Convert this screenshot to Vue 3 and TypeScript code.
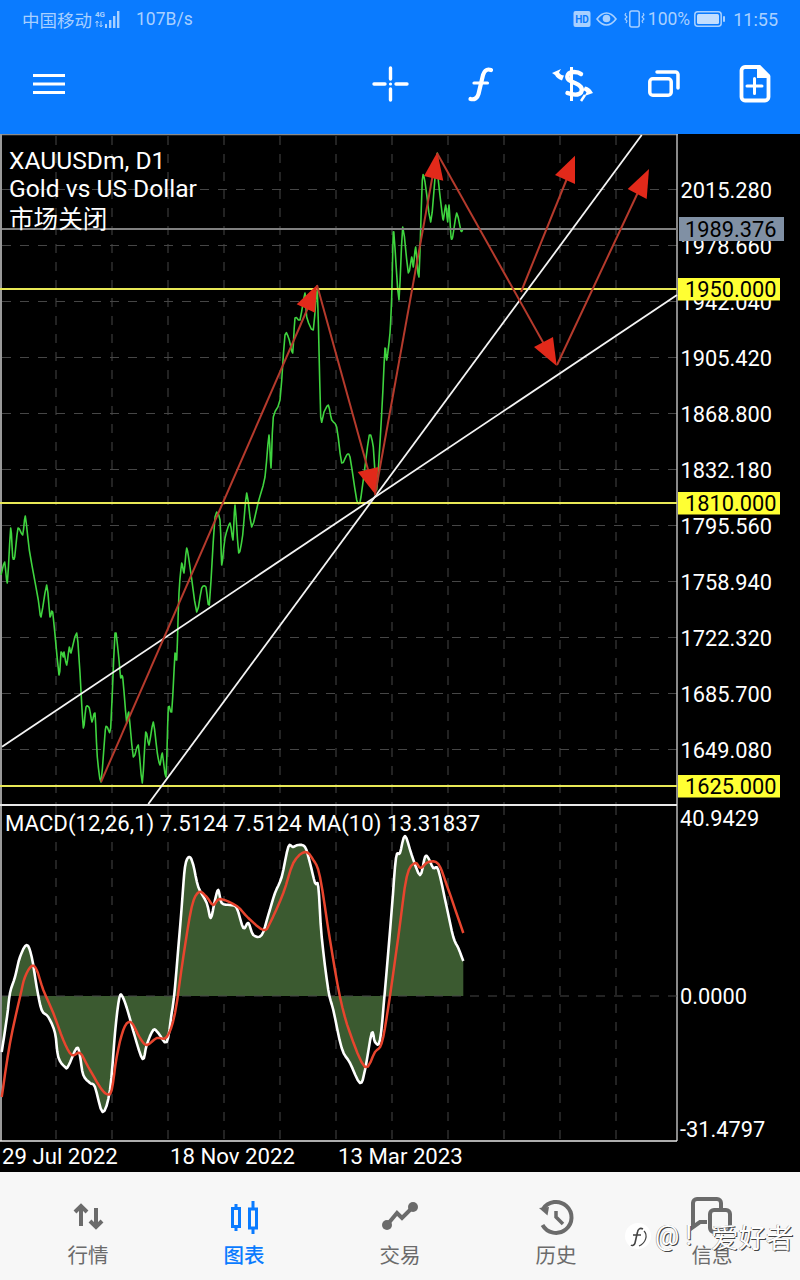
<script setup lang="ts">
type P = [number, number];
const toPts = (a: P[]) => a.map((p) => `${+p[0].toFixed(1)},${+p[1].toFixed(1)}`).join(' ');

// Catmull-Rom resampling: the indicator lines are drawn smooth on the real chart.
const smooth = (a: P[], steps = 4, k = 0.5): P[] => {
  const out: P[] = [];
  for (let i = 0; i < a.length - 1; i++) {
    const p0 = a[Math.max(i - 1, 0)];
    const p1 = a[i];
    const p2 = a[i + 1];
    const p3 = a[Math.min(i + 2, a.length - 1)];
    for (let s = 0; s < steps; s++) {
      const t = s / steps;
      const f = (j: 0 | 1) => {
        const m1 = (p2[j] - p0[j]) * k;
        const m2 = (p3[j] - p1[j]) * k;
        const t2 = t * t;
        const t3 = t2 * t;
        return (2 * t3 - 3 * t2 + 1) * p1[j] + (t3 - 2 * t2 + t) * m1 + (-2 * t3 + 3 * t2) * p2[j] + (t3 - t2) * m2;
      };
      out.push([f(0), f(1)]);
    }
  }
  out.push(a[a.length - 1]);
  return out;
};

const price: P[] = [[1,575],[4.7,562],[7.3,583],[10.7,528],[12.7,557],[14.7,557],[18,528],[22.7,535],[25.3,516],[29.3,550],[38.3,600],[41,617],[46.7,585],[50,617],[52.7,612],[59,675],[61,652],[63.3,657],[64,652],[66.7,665],[69.3,647],[71,653],[76.7,633],[80,673],[83.3,728],[86,707],[89.3,708],[92,722],[95,713],[97.3,757],[101,782],[105.3,730],[107.3,727],[110.7,728],[115,633],[118.3,653],[120.7,678],[122.7,677],[126.7,723],[128.7,712],[133.3,757],[138.3,745],[142.3,783],[145.7,732],[149,745],[153.3,722],[157.3,753],[160,765],[162.3,753],[166,777],[168.3,707],[171.7,712],[175,653],[176.7,660],[179,593],[181.7,563],[184,573],[186.7,548],[190,567],[196.7,612],[201.7,588],[206,587],[209.3,605],[215,517],[220,520],[221.7,565],[225,538],[230,523],[233,540],[235,505],[238.7,553],[242.7,535],[246.7,493],[251.7,527],[258.3,502],[265,477],[269,435],[271,468],[273.3,417],[280,400],[285,335],[289.3,340],[292.7,353],[295,318],[300,320],[305,293],[306.7,317],[313.3,330],[317.3,290],[320.7,417],[324,412],[328.3,405],[331.7,420],[336.7,427],[341.7,463],[346.7,455],[350,457],[356.7,500],[360,502],[363.3,480],[369.3,435],[373.3,447],[376.7,490],[381.7,413],[385,348],[386.7,360],[390,333],[391.7,297],[393.3,232],[395,248],[399,300],[402.7,227],[408.3,273],[411.7,257],[413.3,267],[415.7,247],[419,277],[422.3,180],[425,182],[430.7,222],[435,178],[437.3,153],[438.3,180],[441.7,210],[443.3,220],[445.7,205],[447.7,222],[449,205],[451,237],[452.7,237],[456.7,213],[461,231],[462.7,229.5]];

const macd: P[] = [[1.7,1052],[7,1017],[10,993],[15,977],[20,957],[26.7,945],[31.7,957],[36.7,987],[41.7,1010],[48.3,1017],[55,1033],[58.3,1057],[65,1067],[68.3,1066],[76.7,1048],[80,1056],[83.3,1075],[90,1083],[95,1087],[102.7,1112],[110,1090],[115,1033],[119.3,998],[122.7,997],[128.3,1013],[135,1037],[142.7,1059],[146.7,1045],[153.3,1030],[158.3,1033],[166.7,1042],[171.7,1013],[175,987],[181.7,907],[185,867],[189.3,857],[193.3,865],[198.3,887],[206.7,903],[210.7,918],[215,900],[218.3,890],[221.7,903],[230,905],[236.7,908],[243.3,928],[248.3,923],[253.3,935],[261.7,935],[268.3,915],[275,893],[281.7,877],[288.3,847],[293,847],[298.3,845],[305,847],[310,863],[315,883],[318.3,887],[321.7,937],[328.3,990],[333.3,1010],[341.7,1048],[350,1063],[360,1083],[365,1070],[371.7,1033],[375,1042],[380,1040],[385,990],[391.7,910],[396,858],[400,853],[405,836],[411.7,855],[420,875],[425,857],[428.3,858],[433.3,868],[438.3,870],[446.7,907],[453.3,937],[458.3,948],[463.3,961]];

const signal: P[] = [[1.7,1097],[10,1043],[20,997],[25,977],[31.7,966],[36.7,970],[43.3,990],[53.3,1013],[63.3,1040],[71.7,1055],[80,1053],[88.3,1067],[100,1087],[106.7,1094],[111.7,1090],[116.7,1057],[123.3,1030],[130.7,1022],[140,1038],[146.7,1045],[156.7,1038],[166.7,1037],[175,1013],[183.3,957],[191.7,907],[199,892],[206.7,897],[213.3,905],[220,899],[236.7,906],[248.3,918],[263.3,930],[270,923],[283.3,893],[293.3,863],[305,852],[313.3,860],[320,877],[330,940],[340,997],[350,1033],[365,1067],[375,1052],[381.7,1043],[388.3,1007],[398.3,937],[406.7,877],[415,863],[420.7,868],[428.3,862],[438.3,864],[446.7,885],[463.3,933]];

const pricePts = toPts(smooth(price, 3, 0.35));
const macdSmooth = smooth(macd);
const macdPts = toPts(macdSmooth);
const signalPts = toPts(smooth(signal));
const histPts = toPts([[2, 996] as P, ...macdSmooth, [463.3, 996] as P]);

const gridX = Array.from({ length: 11 }, (_, i) => 56 * (i + 1));
const axis = ['2015.280','1978.660','1942.040','1905.420','1868.800','1832.180','1795.560','1758.940','1722.320','1685.700','1649.080'];
const axisLabels = axis.map((t, i) => ({ t, y: 189.5 + 56 * i }));
const levels = [
  { t: '1950.000', y: 289 },
  { t: '1810.000', y: 503 },
  { t: '1625.000', y: 786 },
];
const arrows = [
  { l: [101,782,314,294], tri: [[317,285],[296.7,304.3],[315,312.7]] },
  { l: [317,285,372,484], tri: [[375.7,495],[357.7,472],[378.3,467]] },
  { l: [375,495,434,168], tri: [[437.3,152.3],[424,176],[443.3,180.7]] },
  { l: [437,153,549,353], tri: [[556.7,366],[534,347],[553,337]] },
  { l: [521,292,568,176], tri: [[575,155.7],[555,175],[575,184]] },
  { l: [557,365,640,188], tri: [[649,169],[627.7,189],[646.7,199]] },
].map((a) => ({ l: a.l, tri: toPts(a.tri as P[]) }));
const dates = [
  { t: '29 Jul 2022', x: 2 },
  { t: '18 Nov 2022', x: 170 },
  { t: '13 Mar 2023', x: 338 },
];
const tabs = [
  { id: 'quotes', label: '行情' },
  { id: 'chart', label: '图表', active: true },
  { id: 'trade', label: '交易' },
  { id: 'history', label: '历史' },
  { id: 'messages', label: '信息' },
];
</script>

<template>
  <div class="screen">
    <header class="top">
      <div class="status">
        <div class="status-left">
          <span class="carrier">中国移动</span>
          <span class="net">
            <svg width="28" height="22" viewBox="0 0 28 22">
              <text x="0" y="9" class="net4g">4G</text>
              <path d="M2 13v6M0.5 15l1.5-2 1.500 2M6 13v6M4.500 17l1.500 2 1.500-2" fill="none" stroke="#a8d0ff" stroke-width="1" />
              <rect x="10" y="16" width="2" height="4" fill="#a8d0ff" />
              <rect x="14" y="12" width="2.400" height="8" fill="#a8d0ff" />
              <rect x="18" y="8" width="2.400" height="12" fill="#a8d0ff" />
              <rect x="22" y="3" width="2.400" height="17" fill="#a8d0ff" />
            </svg>
          </span>
          <span class="speed">107B/s</span>
        </div>
        <div class="status-right">
          <svg width="18" height="18" viewBox="0 0 18 18">
            <rect x="0.500" y="1" width="17" height="16" rx="2" fill="#a8d0ff" />
            <text x="9" y="13" text-anchor="middle" class="hd">HD</text>
          </svg>
          <svg class="eye" width="21" height="14" viewBox="0 0 21 14">
            <path d="M1 7c3-4 6-6 9.500-6S17 3 20 7c-3 4-6 6-9.500 6S4 11 1 7z" fill="none" stroke="#a8d0ff" stroke-width="1.600" />
            <circle cx="10.500" cy="6.500" r="3.800" fill="#a8d0ff" />
          </svg>
          <svg class="vib" width="21" height="18" viewBox="0 0 21 18">
            <rect x="5.800" y="1" width="9.400" height="16" rx="2" fill="none" stroke="#a8d0ff" stroke-width="1.500" />
            <path d="M2 3l-1 2 2 2-2 2 2 2-1 2M19 3l1 2-2 2 2 2-2 2 1 2" fill="none" stroke="#a8d0ff" stroke-width="1.100" />
          </svg>
          <span class="pct">100%</span>
          <svg class="bat" width="32" height="16" viewBox="0 0 32 16">
            <rect x="0.800" y="0.800" width="26.400" height="14.400" rx="3" fill="none" stroke="#a8d0ff" stroke-width="1.500" />
            <rect x="3" y="3" width="22" height="10" rx="1.500" fill="#c2deff" />
            <rect x="29" y="5" width="2" height="6" rx="1" fill="#a8d0ff" />
          </svg>
          <span class="clock">11:55</span>
        </div>
      </div>
      <div class="toolbar">
        <svg class="tool menu" width="34" height="24" viewBox="32 73 34 24">
          <path d="M33 76.500h32M33 85h32M33 93.500h32" stroke="#fff" stroke-width="3" fill="none" />
        </svg>
        <div class="tools">
          <svg class="tool" width="40" height="40" viewBox="370 65 40 40">
            <path d="M374 85h11M396 85h11M390.500 69v11M390.500 90v11" stroke="#fff" stroke-width="3.400" stroke-linecap="round" fill="none" />
            <circle cx="390.500" cy="85" r="1.600" fill="#fff" />
          </svg>
          <svg class="tool" width="30" height="40" viewBox="466 65 30 40">
            <path d="M491 71c-4.500-1.500-6.500.500-8 5l-4.500 19c-1 4-4 6-8 5" stroke="#fff" stroke-width="4.200" stroke-linecap="round" fill="none" />
            <path d="M474 84h13.500" stroke="#fff" stroke-width="3.200" stroke-linecap="round" />
          </svg>
          <svg class="tool" width="46" height="40" viewBox="550 65 46 40">
            <path d="M571.500 68v34" stroke="#fff" stroke-width="3" />
            <path d="M581 75c-3-2.500-11-3-13 .500-2.500 5 3 7 7 8.500 5 2 8.500 5 6 9.500-2 3-8.500 2.500-13.500.500" stroke="#fff" stroke-width="4.400" fill="none" stroke-linecap="round" />
            <path d="M552 74l9-4-2 3.500c1 2 3 3 5 3l-2 5c-3-1-6-3-7-5.500z" fill="#fff" />
            <path d="M593 94l-8.500 3 2-3.500c-1-1.500-2-2-3.500-2l2-4c3 .500 5 2 6 3.500z" fill="#fff" />
            <path d="M585 96l-4 6" stroke="#fff" stroke-width="2.500" />
          </svg>
          <svg class="tool" width="36" height="32" viewBox="646 69 36 32">
            <rect x="649.800" y="79.800" width="21.400" height="16.400" rx="3" fill="none" stroke="#fff" stroke-width="3.500" />
            <path d="M657 73h18.500a2.500 2.500 0 0 1 2.500 2.500V89" fill="none" stroke="#fff" stroke-width="3.500" stroke-linecap="round" />
          </svg>
          <svg class="tool" width="36" height="42" viewBox="737 64 36 42">
            <path d="M745 68h14l9.500 9.500V98a3.500 3.500 0 0 1-3.500 3.500h-20a3.500 3.500 0 0 1-3.500-3.500V71.500A3.500 3.500 0 0 1 745 68z" fill="none" stroke="#fff" stroke-width="3.800" />
            <path d="M757 66h3l10 10v3h-13z" fill="#fff" />
            <path d="M747 87h15M754.500 79.500v15" stroke="#fff" stroke-width="3" stroke-linecap="round" />
          </svg>
        </div>
      </div>
    </header>

    <main class="chart">
      <svg class="chart-svg" width="800" height="1038" viewBox="0 134 800 1038">
        <!-- grid -->
        <g class="grid">
          <line v-for="x in gridX" :key="'m' + x" :x1="x" y1="136" :x2="x" y2="804" />
          <line v-for="x in gridX" :key="'s' + x" :x1="x" y1="806" :x2="x" y2="1140" />
          <line v-for="a in axisLabels" :key="a.t" x1="2" :y1="a.y" x2="677" :y2="a.y" />
        </g>

        <!-- frame -->
        <line x1="0" y1="134.500" x2="678" y2="134.500" class="frame" />
        <rect x="0" y="134" width="2" height="1007" fill="#9a9a9a" />
        <line x1="677" y1="134" x2="677" y2="1141" class="frame-r" />
        <line x1="0" y1="805" x2="677" y2="805" stroke="#e8e8e8" stroke-width="2" />
        <line x1="0" y1="1141" x2="677" y2="1141" stroke="#e8e8e8" stroke-width="1.500" />

        <!-- main pane -->
        <polyline :points="pricePts" class="price" />
        <line x1="2" y1="229" x2="677" y2="229" stroke="#808080" stroke-width="2" />
        <line v-for="l in levels" :key="l.y" x1="0" :y1="l.y" x2="677" :y2="l.y" stroke="#e8e856" stroke-width="2" />
        <line x1="2" y1="746.700" x2="677" y2="295" class="trend" />
        <line x1="148.300" y1="804" x2="641.700" y2="135" class="trend" />
        <g v-for="(a, i) in arrows" :key="i">
          <line :x1="a.l[0]" :y1="a.l[1]" :x2="a.l[2]" :y2="a.l[3]" stroke="#b53a2c" stroke-width="2" />
          <polygon :points="a.tri" fill="#e2291a" />
        </g>

        <!-- price text -->
        <text x="9" y="169" class="title">XAUUSDm, D1</text>
        <text x="9" y="197" class="title">Gold vs US Dollar</text>
        <text x="9" y="228" class="title">市场关闭</text>

        <text v-for="a in axisLabels" :key="'t' + a.t" x="680.500" :y="a.y + 8" class="axis">{{ a.t }}</text>

        <rect x="679" y="217" width="105" height="24" fill="#8090a4" />
        <text x="685" y="237" class="axis dark">1989.376</text>

        <g v-for="l in levels" :key="'lv' + l.y">
          <rect x="678" :y="l.y - 11" width="102" height="22.500" fill="#ffff33" />
          <text x="685" :y="l.y + 8" class="axis dark">{{ l.t }}</text>
        </g>

        <!-- macd pane -->
        <polygon :points="histPts" fill="#3b5a30" />
        <line x1="2" y1="996" x2="677" y2="996" class="grid-line" />
        <polyline :points="macdPts" class="macd" />
        <polyline :points="signalPts" class="signal" />
        <text x="5" y="831" class="macd-title">MACD(12,26,1) 7.5124 7.5124 MA(10) 13.31837</text>
        <text x="680" y="826" class="axis">40.9429</text>
        <text x="680" y="1004" class="axis">0.0000</text>
        <text x="680" y="1137" class="axis">-31.4797</text>

        <text v-for="d in dates" :key="d.t" :x="d.x" y="1164" class="date">{{ d.t }}</text>
      </svg>
    </main>

    <nav class="tabs">
      <div v-for="t in tabs" :key="t.id" class="tab" :class="{ active: t.active }">
        <svg v-if="t.id === 'quotes'" width="44" height="44" viewBox="66 1195 44 44">
          <path d="M81 1207v19M75 1212l6-6 6 6" fill="none" stroke="#6b6b6b" stroke-width="4" />
          <path d="M96 1208v19M90 1221l6 6 6-6" fill="none" stroke="#6b6b6b" stroke-width="4" />
        </svg>
        <svg v-else-if="t.id === 'chart'" width="44" height="44" viewBox="222 1195 44 44">
          <rect x="232.500" y="1208.500" width="7" height="18" fill="none" stroke="#0a7bff" stroke-width="3" />
          <rect x="249.500" y="1209" width="7" height="19" fill="none" stroke="#0a7bff" stroke-width="3" />
          <path d="M236 1204v5M236 1226v5M253 1201v8M253 1228v6" stroke="#0a7bff" stroke-width="3" />
        </svg>
        <svg v-else-if="t.id === 'trade'" width="44" height="44" viewBox="378 1195 44 44">
          <path d="M387 1225l10-12 5 5 11-11" fill="none" stroke="#6b6b6b" stroke-width="4" />
          <circle cx="387" cy="1225" r="5" fill="#6b6b6b" />
          <circle cx="413" cy="1207" r="5" fill="#6b6b6b" />
        </svg>
        <svg v-else-if="t.id === 'history'" width="44" height="44" viewBox="534 1195 44 44">
          <path d="M543 1209a15.500 15.500 0 1 1-.500 16" fill="none" stroke="#6b6b6b" stroke-width="4" />
          <path d="M539 1208l10-1-1.500 8.500z" fill="#6b6b6b" />
          <path d="M556 1211v6l7 7" fill="none" stroke="#6b6b6b" stroke-width="3.500" />
        </svg>
        <svg v-else width="44" height="44" viewBox="690 1195 44 44">
          <path d="M721 1208v-5a4 4 0 0 0-4-4h-20a4 4 0 0 0-4 4v24l7-5h7" fill="none" stroke="#6b6b6b" stroke-width="4" />
          <rect x="710" y="1210" width="20" height="22" rx="4" fill="none" stroke="#6b6b6b" stroke-width="4" />
        </svg>
        <span class="tab-label">{{ t.label }}</span>
      </div>

      <div class="watermark">
        <span class="wm-logo">
          <svg width="26" height="26" viewBox="0 0 26 26">
            <circle cx="13" cy="13" r="13" fill="#fff" />
            <path d="M18 6c-3-1.500-5 0-5.500 3l-2.500 11c-.5 2.500-3 3-4 2M8 12h8" fill="none" stroke="#444" stroke-width="1.600" />
            <path d="M19 8c4 4 2 12-5 15" fill="none" stroke="#444" stroke-width="1.200" />
          </svg>
        </span>
        <span class="wm-at">@!</span>
        <span class="wm-name">爱好者</span>
      </div>
    </nav>
  </div>
</template>

<style scoped>
.screen {
  width: 800px;
  height: 1280px;
  display: flex;
  flex-direction: column;
  overflow: hidden;
  font-family: Roboto, "Noto Sans CJK SC", sans-serif;
}
.top {
  height: 134px;
  background: #0a7bff;
  display: flex;
  flex-direction: column;
}
.status {
  height: 38px;
  padding: 0 22px;
  display: flex;
  align-items: center;
  justify-content: space-between;
  color: #a8d0ff;
  font-size: 17.500px;
}
.status-left,
.status-right {
  display: flex;
  align-items: center;
}
.carrier {
  font-family: "Noto Sans CJK SC", sans-serif;
  font-size: 17.500px;
}
.net {
  display: flex;
  margin-left: 3px;
}
.net4g {
  font: 700 8px Roboto, sans-serif;
  fill: #a8d0ff;
}
.hd {
  font: 700 10px Roboto, sans-serif;
  fill: #0a7bff;
}
.speed {
  margin-left: 13px;
}
.eye {
  margin-left: 5px;
}
.vib {
  margin-left: 7px;
}
.pct {
  margin-left: 3px;
}
.bat {
  margin-left: 4px;
}
.clock {
  margin-left: 7px;
  font-size: 18px;
}
.toolbar {
  flex: 1;
  display: flex;
  align-items: center;
  justify-content: space-between;
  padding: 0 27px 0 32px;
  margin-top: -4px;
}
.tool {
  display: block;
}
.tools {
  display: flex;
  align-items: center;
  gap: 0;
}
.tools .tool:nth-child(2) {
  margin-left: 56px;
}
.tools .tool:nth-child(3) {
  margin-left: 54px;
}
.tools .tool:nth-child(4) {
  margin-left: 50px;
}
.tools .tool:nth-child(5) {
  margin-left: 55px;
}
.chart {
  flex: 1;
  background: #000;
  overflow: hidden;
}
.chart-svg {
  display: block;
}
.grid line,
.grid-line {
  stroke: #464646;
  stroke-width: 1;
  stroke-dasharray: 9 9;
}
.frame {
  stroke: #8a8a8a;
  stroke-width: 1.500;
}
.frame-r {
  stroke: #b8b8b8;
  stroke-width: 1.500;
}
.price {
  fill: none;
  stroke: #3fd43f;
  stroke-width: 1.600;
  stroke-linejoin: round;
}
.trend {
  stroke: #f4f4f4;
  stroke-width: 1.800;
}
.macd {
  fill: none;
  stroke: #fff;
  stroke-width: 2.600;
  stroke-linejoin: round;
}
.signal {
  fill: none;
  stroke: #e8452e;
  stroke-width: 2.500;
  stroke-linejoin: round;
}
.title {
  font: 400 24.600px Roboto, "Noto Sans CJK SC", sans-serif;
  fill: #fff;
}
.axis {
  font: 400 21.800px Roboto, sans-serif;
  fill: #fff;
}
.axis.dark {
  fill: #000;
}
.macd-title {
  font: 400 22.200px Roboto, sans-serif;
  fill: #fff;
}
.date {
  font: 400 22.200px Roboto, sans-serif;
  fill: #fff;
}
.tabs {
  position: relative;
  height: 108px;
  background: #f7f7f7;
  display: grid;
  grid-template-columns: repeat(5, 156px);
  padding: 0 10px;
  box-sizing: border-box;
}
.tab {
  display: flex;
  flex-direction: column;
  align-items: center;
  padding-top: 23px;
  color: #6b6b6b;
}
.tab svg {
  display: block;
}
.tab-label {
  font: 400 20.500px/1 "Noto Sans CJK SC", sans-serif;
  margin-top: 5px;
}
.tab.active {
  color: #0a7bff;
}
.tab.active .tab-label {
  font-weight: 500;
}
.watermark {
  position: absolute;
  left: 625px;
  top: 44px;
  display: flex;
  align-items: center;
  color: #fff;
  text-shadow: 1px 1px 0 #444, -0.500px 0 0 #888;
}
.wm-logo {
  display: flex;
}
.wm-at {
  font: 400 27px Roboto, sans-serif;
  margin-left: 4px;
  width: 56px;
  letter-spacing: 6px;
}
.wm-name {
  font: 400 27.500px "Noto Sans CJK SC", sans-serif;
}
</style>
